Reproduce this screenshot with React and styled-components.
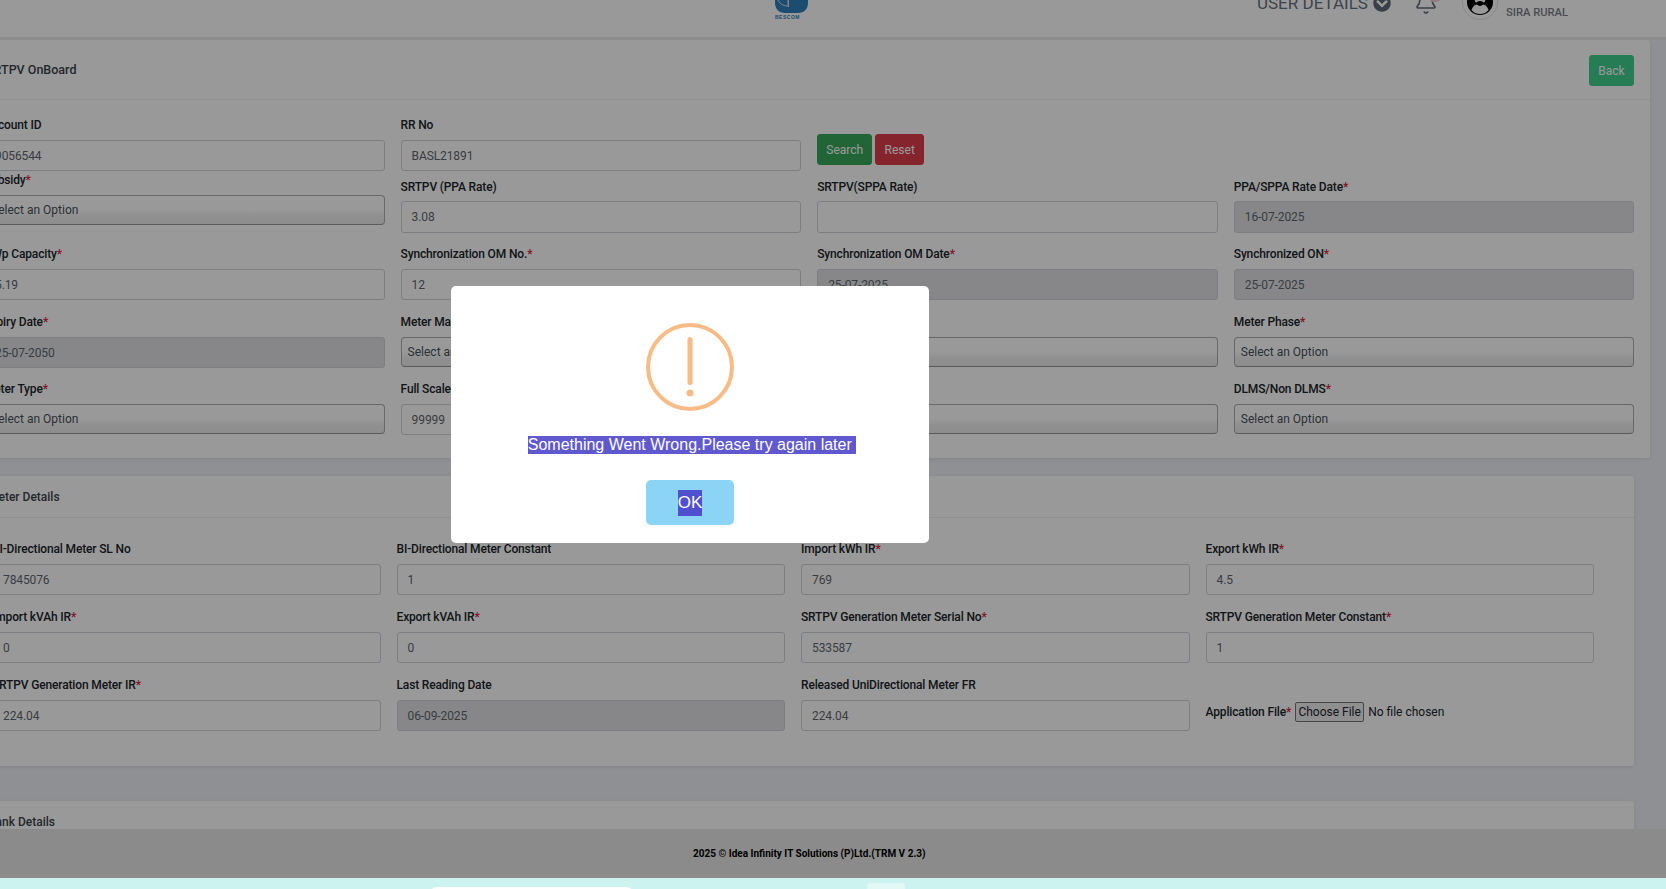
import React from "react";
import styled, { createGlobalStyle } from "styled-components";
import { FaChevronCircleDown } from "react-icons/fa";
import { Bell } from "lucide-react";

const Global = createGlobalStyle`
  html, body { margin: 0; padding: 0; width: 1666px; height: 889px; overflow: hidden; }
  body { background: #cdf3f0; font-family: Roboto, "Liberation Sans", sans-serif; }
  #root { position: relative; width: 1666px; height: 889px; overflow: hidden; }
  * { box-sizing: border-box; }
`;

const Header = styled.header`
  display: flex;
  height: 40px;
  background: #fff;
  border-bottom: 3px solid #ebebeb;
  overflow: hidden;
`;
const Logo = styled.div`
  margin-left: 775px;
  width: 32px;
  display: flex;
  flex-direction: column;
  color: #2f80bd;
  svg { display: block; }
`;
const LogoText = styled.span`
  font: 700 5px/5px "Liberation Sans", sans-serif;
  letter-spacing: 0.5px;
  margin-top: 2px;
  white-space: nowrap;
`;
const UserDetails = styled.div`
  margin: -9px 0 0 450px;
  height: 24px;
  display: flex;
  align-items: center;
  gap: 5px;
  font-size: 17px;
  line-height: 24px;
  color: #68727f;
  white-space: nowrap;
  width: 134px;
`;
const BellBox = styled.div`
  position: relative;
  margin: -9px 0 0 23px;
  width: 24px;
  height: 24px;
  color: #5f6a78;
  svg { display: block; }
`;
const Dot = styled.span`
  position: absolute;
  left: 15px;
  top: 3px;
  width: 12px;
  height: 8px;
  border-radius: 50%;
  background: #f5d3df;
`;
const Avatar = styled.div`
  margin: -16px 0 0 24px;
  width: 36px;
  height: 36px;
  border-radius: 50%;
  border: 1px solid #e6e6e6;
  display: flex;
  align-items: center;
  justify-content: center;
`;
const Place = styled.div`
  margin: 5px 0 0 8px;
  font-size: 11.200px;
  line-height: 15px;
  font-weight: 500;
  color: #7b7f8a;
  white-space: nowrap;
`;

const Main = styled.main`
  height: 789px;
  margin-left: -31px;
  width: 1697px;
  background: #eef0f5;
  overflow: hidden;
`;
const Card = styled.section`
  background: #fff;
  border-radius: 3px;
  width: ${(p) => p.$width}px;
  margin-left: ${(p) => p.$left}px;
  margin-bottom: ${(p) => p.$gap}px;
  box-shadow: 0 1px 4px rgba(0, 0, 0, 0.08);
`;
const CardHead = styled.div`
  height: ${(p) => p.$height}px;
  padding: 0 16px 0 ${(p) => p.$pad}px;
  border-bottom: 1px solid #eceef1;
  display: flex;
  align-items: center;
  justify-content: space-between;
  font-size: ${(p) => p.$size || 12}px;
  font-weight: 500;
  color: #3c4248;
`;
const BackButton = styled.button`
  width: 45px;
  height: 31px;
  margin-top: 2px;
  padding: 0;
  border: 1px solid #3fcf8e;
  border-radius: 3px;
  background: #3fcf8e;
  color: #fff;
  font: inherit;
  font-size: 12px;
  font-weight: 400;
`;
const Grid = styled.div`
  display: grid;
  grid-template-columns: repeat(4, ${(p) => p.$col}px);
  grid-template-rows: ${(p) => p.$rows};
  column-gap: 16px;
  padding: ${(p) => p.$top}px 0 ${(p) => p.$bottom}px ${(p) => p.$left}px;
`;
const Field = styled.div`
  margin-top: ${(p) => (p.$lift ? -6 : 0)}px;
  min-width: 0;
`;
const Label = styled.label`
  display: block;
  height: ${(p) => (p.$tight ? 19 : 18)}px;
  margin-bottom: ${(p) => (p.$tight ? 5 : 6)}px;
  padding-top: ${(p) => (p.$tight ? 1 : 0)}px;
  font-size: 12px;
  letter-spacing: -0.15px;
  line-height: 18px;
  font-weight: 500;
  color: #212529;
  white-space: nowrap;
`;
const Star = styled.span`
  color: #e3203a;
`;
const Input = styled.div`
  height: ${(p) => p.$h || 31}px;
  padding: 0 10px;
  border: 1px solid #ced4da;
  border-radius: 3px;
  background: ${(p) => (p.$off ? "#e1e2e5" : "#fff")};
  font-size: 12px;
  letter-spacing: -0.1px;
  line-height: 30px;
  color: #5f666d;
  white-space: nowrap;
`;
const Select = styled.div`
  height: 30px;
  padding: 0 6px;
  border: 1px solid #adadad;
  border-bottom-color: #979797;
  border-radius: 4px;
  background: linear-gradient(#fff 0%, #fff 50%, #f0f0f0 72%, #ececec 100%);
  font-size: 12px;
  line-height: 28px;
  color: #495057;
  white-space: nowrap;
`;
const ButtonCell = styled.div`
  display: flex;
  gap: 3px;
  padding-top: 18px;
`;
const ActionButton = styled.button`
  width: ${(p) => p.$w}px;
  height: 31px;
  padding: 0;
  border: 1px solid ${(p) => p.$color};
  border-radius: 3px;
  background: ${(p) => p.$color};
  color: #fff;
  font: inherit;
  font-size: 12px;
`;
const FileRow = styled.div`
  display: flex;
  align-items: center;
  height: 24px;
  margin-top: 24px;
  font-size: 12px;
  letter-spacing: -0.15px;
  color: #212529;
  white-space: nowrap;
`;
const FileLabel = styled.span`
  font-weight: 500;
  margin-right: 4px;
`;
const FileInput = styled.input`
  font: inherit;
  color: #212529;
  width: 220px;
  &::file-selector-button {
    font: inherit;
    width: 69px;
    height: 20px;
    padding: 0;
    margin-right: 4px;
    border: 1px solid #767676;
    border-radius: 2px;
    background: #efefef;
    color: #212529;
  }
`;

const Footer = styled.footer`
  height: 49px;
  background: #e8e8e8;
  display: flex;
  align-items: center;
  padding: 0 0 0 693px;
  font-size: 10px;
  font-weight: 700;
  color: #000;
  white-space: nowrap;
`;
const Strip = styled.div`
  height: 11px;
  position: relative;
  overflow: hidden;
`;
const Pill = styled.span`
  position: absolute;
  left: 429px;
  top: 9px;
  width: 205px;
  height: 20px;
  border-radius: 8px;
  background: #fff;
`;
const Chip = styled.span`
  position: absolute;
  left: 867px;
  top: 5px;
  width: 38px;
  height: 20px;
  border-radius: 4px;
  background: #e2f8f6;
`;

const Overlay = styled.div`
  position: absolute;
  left: 0;
  top: 0;
  width: 1666px;
  height: 878px;
  background: rgba(0, 0, 0, 0.4);
`;
const Modal = styled.div`
  position: absolute;
  left: 451px;
  top: 286px;
  width: 478px;
  height: 257px;
  background: #fff;
  border-radius: 5px;
  display: flex;
  flex-direction: column;
  align-items: center;
  padding-top: 37px;
  font-family: "Liberation Sans", Arial, sans-serif;
`;
const AlertIcon = styled.div`
  width: 88px;
  height: 88px;
  svg { display: block; }
`;
const Message = styled.div`
  margin: 25px 0 0 4px;
  height: 18px;
  font-size: 16px;
  line-height: 18px;
  color: #fff;
  background: #5f58cf;
  white-space: pre;
`;
const OkButton = styled.button`
  margin-top: 26px;
  width: 88px;
  height: 45px;
  padding: 0;
  border: 0;
  border-radius: 5px;
  background: #8cd4f5;
  display: flex;
  align-items: center;
  justify-content: center;
  font: inherit;
`;
const OkText = styled.span`
  display: block;
  height: 26px;
  font-size: 17px;
  line-height: 26px;
  color: #fff;
  background: #4f4fcf;
`;

const Req = ({ children }) => (
  <>
    {children}
    <Star>*</Star>
  </>
);

const Txt = ({ label, value, req, off, h }) => (
  <Field>
    <Label $tight={h === 32}>{req ? <Req>{label}</Req> : label}</Label>
    <Input $off={off} $h={h}>{value}</Input>
  </Field>
);
const Sel = ({ label, lift }) => (
  <Field $lift={lift}>
    <Label><Req>{label}</Req></Label>
    <Select>Select an Option</Select>
  </Field>
);

export default function App() {
  return (
    <>
      <Global />
      <Header>
        <Logo>
          <svg width="33" height="13" viewBox="0 0 33 13">
            <path d="M0 0H33V3C33 9 29 13 23 13H10C4 13 0 9 0 3Z" fill="currentColor" />
            <path d="M3 0C4 3 8 6 12.500 6" fill="none" stroke="#ddd" strokeWidth="1" />
            <rect x="12.500" y="0" width="1.500" height="7" fill="#ddd" />
          </svg>
          <LogoText>BESCOM</LogoText>
        </Logo>
        <UserDetails>
          USER DETAILS
          <FaChevronCircleDown size={18} color="#5f6a78" />
        </UserDetails>
        <BellBox>
          <Bell size={24} strokeWidth={1.6} />
          <Dot />
        </BellBox>
        <Avatar>
          <svg width="26" height="26" viewBox="0 0 26 26">
            <circle cx="13" cy="13" r="13" fill="#000" />
            <circle cx="13" cy="10" r="5.500" fill="#fff" />
            <path d="M4.500 21C6 16.500 9 15 13 15s7 1.500 8.500 6C19 24 16 25 13 25s-6-1-8.500-4Z" fill="#fff" />
            <path d="M13 12c2 0 3.500 1 4 2-1 2-2.500 3-4 3s-3-1-4-3c.5-1 2-2 4-2Z" fill="#000" />
          </svg>
        </Avatar>
        <Place>SIRA RURAL</Place>
      </Header>

      <Main>
        <Card $width={1681} $left={0} $gap={18}>
          <CardHead $height={60} $pad={17} $size={12.500}>
            <span>SRTPV OnBoard</span>
            <BackButton>Back</BackButton>
          </CardHead>
          <Grid $col={400.600} $rows="61px 68px 68px 67px 78px" $top={16} $bottom={0} $left={15}>
            <Txt label="Account ID" value="9056544" />
            <Txt label="RR No" value="BASL21891" />
            <ButtonCell>
              <ActionButton $w={55} $color="#38a85a">Search</ActionButton>
              <ActionButton $w={49} $color="#e03c4c">Reset</ActionButton>
            </ButtonCell>
            <div />

            <Sel label="Subsidy" lift />
            <Txt label="SRTPV (PPA Rate)" value="3.08" h={32} />
            <Txt label="SRTPV(SPPA Rate)" value="" h={32} />
            <Txt label="PPA/SPPA Rate Date" value="16-07-2025" req off h={32} />

            <Txt label="KWp Capacity" value="5.19" req />
            <Txt label="Synchronization OM No." value="12" req />
            <Txt label="Synchronization OM Date" value="25-07-2025" req off />
            <Txt label="Synchronized ON" value="25-07-2025" req off />

            <Txt label="Expiry Date" value="25-07-2050" req off />
            <Sel label="Meter Make" />
            <Sel label="Meter Model" />
            <Sel label="Meter Phase" />

            <Sel label="Meter Type" />
            <Txt label="Full Scale" value="99999" req />
            <Sel label="Meter Class" />
            <Sel label="DLMS/Non DLMS" />
          </Grid>
        </Card>

        <Card $width={1658} $left={7} $gap={35}>
          <CardHead $height={42} $pad={12}>
            <span>Meter Details</span>
          </CardHead>
          <Grid $col={388.500} $rows="68px 68px 68px" $top={22} $bottom={22} $left={16}>
            <Txt label="BI-Directional Meter SL No" value="7845076" />
            <Txt label="BI-Directional Meter Constant" value="1" />
            <Txt label="Import kWh IR" value="769" req />
            <Txt label="Export kWh IR" value="4.5" req />

            <Txt label="Import kVAh IR" value="0" req />
            <Txt label="Export kVAh IR" value="0" req />
            <Txt label="SRTPV Generation Meter Serial No" value="533587" req />
            <Txt label="SRTPV Generation Meter Constant" value="1" req />

            <Txt label="SRTPV Generation Meter IR" value="224.04" req />
            <Txt label="Last Reading Date" value="06-09-2025" off />
            <Txt label="Released UniDirectional Meter FR" value="224.04" />
            <FileRow>
              <FileLabel><Req>Application File</Req></FileLabel>
              <FileInput type="file" />
            </FileRow>
          </Grid>
        </Card>

        <Card $width={1658} $left={7} $gap={0}>
          <CardHead $height={42} $pad={12}>
            <span>Bank Details</span>
          </CardHead>
        </Card>
      </Main>

      <Footer>2025 © Idea Infinity IT Solutions (P)Ltd.(TRM V 2.3)</Footer>
      <Strip>
        <Pill />
        <Chip />
      </Strip>

      <Overlay>
        <Modal>
          <AlertIcon>
            <svg width="88" height="88" viewBox="0 0 88 88">
              <circle cx="44" cy="44" r="42" fill="none" stroke="#f8bb86" strokeWidth="4" />
              <rect x="41.500" y="14" width="5" height="48" rx="2.500" fill="#f8bb86" />
              <circle cx="44" cy="70" r="3.500" fill="#f8bb86" />
            </svg>
          </AlertIcon>
          <Message>Something Went Wrong.Please try again later </Message>
          <OkButton>
            <OkText>OK</OkText>
          </OkButton>
        </Modal>
      </Overlay>
    </>
  );
}
